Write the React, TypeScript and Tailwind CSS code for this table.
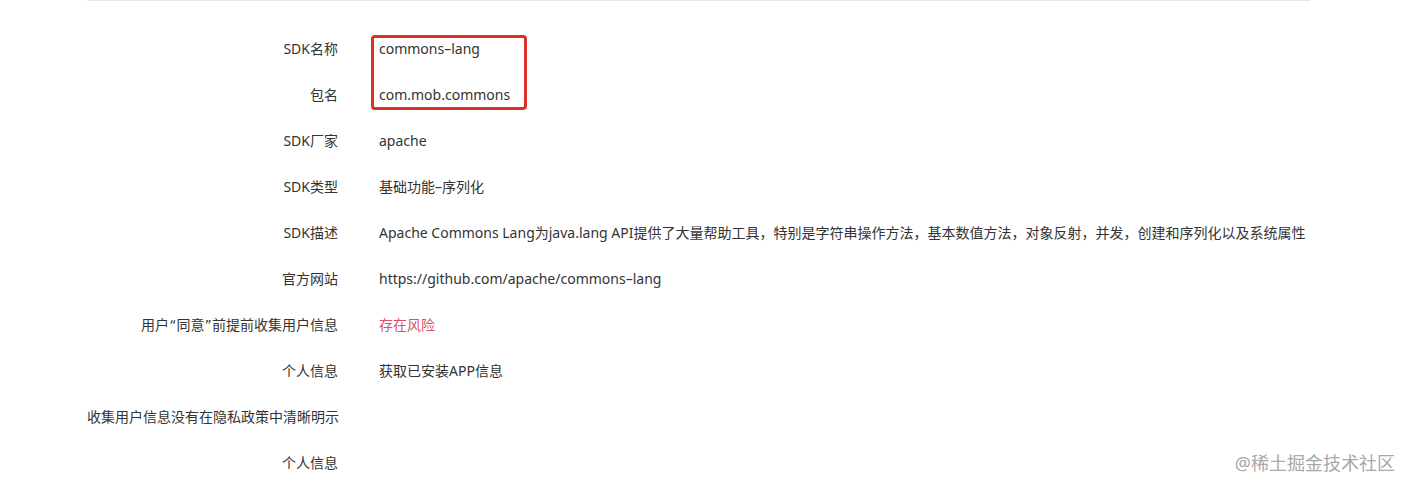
import React from "react";

const Q = ({ c }: { c: string }) => <span className="px-[1.25px]">{c}</span>;

const rows: { label: React.ReactNode; value: string; red?: boolean }[] = [
  { label: "SDK名称", value: "commons–lang" },
  { label: "包名", value: "com.mob.commons" },
  { label: "SDK厂家", value: "apache" },
  { label: "SDK类型", value: "基础功能–序列化" },
  {
    label: "SDK描述",
    value:
      "Apache Commons Lang为java.lang API提供了大量帮助工具，特别是字符串操作方法，基本数值方法，对象反射，并发，创建和序列化以及系统属性",
  },
  { label: "官方网站", value: "https://github.com/apache/commons–lang" },
  {
    label: (
      <>
        用户
        <Q c="“" />
        同意
        <Q c="”" />
        前提前收集用户信息
      </>
    ),
    value: "存在风险",
    red: true,
  },
  { label: "个人信息", value: "获取已安装APP信息" },
  { label: "收集用户信息没有在隐私政策中清晰明示", value: "" },
  { label: "个人信息", value: "" },
];

export default function App() {
  return (
    <div
      className="relative w-[1412px] h-[490px] bg-white overflow-hidden text-[14px] text-[#333333]"
      style={{ fontFamily: '"Noto Sans", "Noto Sans CJK SC", sans-serif' }}
    >
      <div className="ml-[87px] w-[1223px] border-t border-[#e6e6e6] pt-[24px]">
        {rows.map((r, i) => (
          <div key={i} className="flex h-[46px] items-center whitespace-nowrap">
            <div className="w-[251px] shrink-0 text-right">{r.label}</div>
            <div className={"ml-[41px] " + (r.red ? "text-[#d9506a]" : "")}>{r.value}</div>
          </div>
        ))}
      </div>
      <div className="absolute left-[371px] top-[35px] w-[156px] h-[75px] border-[3px] border-[#dc3129] rounded-[4px]" />
      <div className="absolute right-[17px] top-[451px] text-[18px] leading-[24px] text-[#a8a8a8]">
        @稀土掘金技术社区
      </div>
    </div>
  );
}
